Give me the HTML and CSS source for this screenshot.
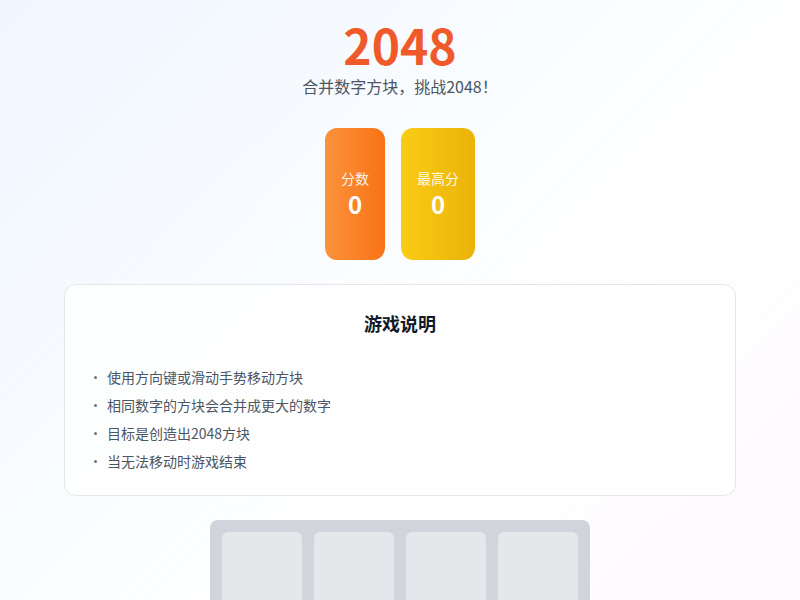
FILE: index.html
```html
<!DOCTYPE html>
<html lang="zh-CN">
  <head>
    <meta charset="UTF-8" />
    <meta name="viewport" content="width=device-width, initial-scale=1.0" />
    <title>2048</title>
    <link rel="stylesheet" href="styles.css">
  </head>
  <body>
    <div class="page">
      <header class="header">
        <h1 class="title">2048</h1>
        <p class="subtitle">合并数字方块，挑战2048！</p>
      </header>

      <div class="scores">
        <div class="score-box score">
          <span class="score-label">分数</span>
          <span class="score-value" id="score">0</span>
        </div>
        <div class="score-box best">
          <span class="score-label">最高分</span>
          <span class="score-value" id="best">0</span>
        </div>
      </div>

      <div class="rules">
        <h2>游戏说明</h2>
        <ul>
          <li>使用方向键或滑动手势移动方块</li>
          <li>相同数字的方块会合并成更大的数字</li>
          <li>目标是创造出2048方块</li>
          <li>当无法移动时游戏结束</li>
        </ul>
      </div>

      <div class="board">
        <div class="cell"></div>
        <div class="cell"></div>
        <div class="cell"></div>
        <div class="cell"></div>
        <div class="cell"></div>
        <div class="cell"></div>
        <div class="cell"></div>
        <div class="cell"></div>
        <div class="cell"></div>
        <div class="cell"></div>
        <div class="cell"></div>
        <div class="cell"></div>
        <div class="cell"></div>
        <div class="cell"></div>
        <div class="cell"></div>
        <div class="cell"></div>
      </div>
    </div>
  </body>
</html>
```

FILE: styles.css
```css
* {
  box-sizing: border-box;
  margin: 0;
  padding: 0;
}

body {
  font-family: "Noto Sans CJK SC", "Noto Sans", sans-serif;
  background: linear-gradient(135deg, #eff6ff 0%, #ffffff 50%, #faf5ff 100%);
  min-height: 100vh;
  color: #111827;
}

.page {
  max-width: 672px;
  margin: 0 auto;
  padding: 14px 0 40px;
  display: flex;
  flex-direction: column;
  align-items: center;
}

.header {
  text-align: center;
}

.title {
  font-size: 48px;
  font-weight: 700;
  line-height: 60px;
  color: #f05a2a;
}

.subtitle {
  font-size: 16px;
  line-height: 24px;
  color: #4b5563;
}

.scores {
  display: flex;
  gap: 16px;
  margin-top: 30px;
}

.score-box {
  display: flex;
  flex-direction: column;
  align-items: center;
  justify-content: center;
  height: 132px;
  padding: 0 16px;
  border-radius: 12px;
  color: #ffffff;
}

.score {
  background: linear-gradient(90deg, #fb923c, #f97316);
}

.best {
  background: linear-gradient(90deg, #facc15, #eab308);
}

.score-label {
  font-size: 14px;
  line-height: 20px;
  opacity: 0.9;
}

.score-value {
  font-size: 24px;
  font-weight: 700;
  line-height: 32px;
}

.rules {
  width: 100%;
  margin-top: 24px;
  padding: 24px 29px 20px;
  background: rgba(255, 255, 255, 0.85);
  border: 1px solid #e5e7eb;
  border-radius: 12px;
}

.rules h2 {
  text-align: center;
  font-size: 18px;
  font-weight: 700;
  line-height: 28px;
  color: #111827;
  margin-bottom: 26px;
}

.rules ul {
  list-style: none;
}

.rules li {
  display: flex;
  align-items: center;
  gap: 10px;
  font-size: 14px;
  line-height: 28px;
  color: #4b5563;
}

.rules li::before {
  content: "";
  width: 3px;
  height: 3px;
  border-radius: 50%;
  background: #6b7280;
}

.board {
  display: grid;
  grid-template-columns: repeat(4, 80px);
  grid-auto-rows: 80px;
  gap: 12px;
  padding: 12px;
  margin-top: 24px;
  background: #d1d5db;
  border-radius: 8px;
}

.cell {
  background: #e5e7eb;
  border-radius: 6px;
}
```
